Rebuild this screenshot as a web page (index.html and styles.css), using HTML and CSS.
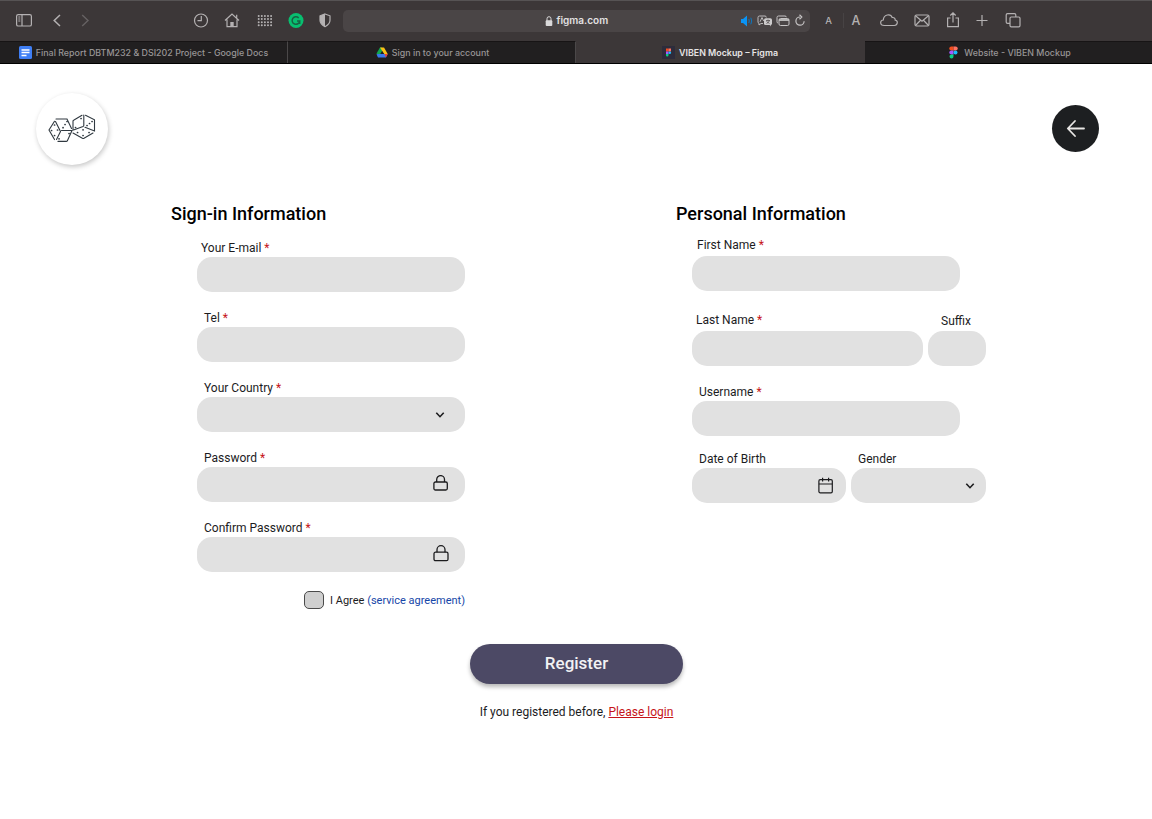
FILE: index.html
```html
<!DOCTYPE html>
<html lang="en">
<head>
<meta charset="utf-8">
<title>VIBEN Mockup – Figma</title>
<link rel="stylesheet" href="styles.css">
</head>
<body>
<header class="browser">
  <div class="toolbar">
    <svg class="ico sidebar" viewBox="0 0 20 20"><rect x="2.6" y="4.6" width="14.800" height="11.400" rx="1.600"/><path d="M8 4.500V16M4.300 7h2M4.300 9h2M4.300 11h2"/></svg>
    <svg class="ico back" viewBox="0 0 20 20"><path d="M13 5 7.2 10.5 13 16"/></svg>
    <svg class="ico forward" viewBox="0 0 20 20"><path d="M7.2 5 13 10.5 7.2 16"/></svg>
    <svg class="ico clock" viewBox="0 0 20 20"><circle cx="10" cy="10.5" r="6.5"/><path d="M10.3 6v4.7H6.5"/></svg>
    <svg class="ico home" viewBox="0 0 20 20"><path d="M3 10.5 10 4l7 6.500M14.700 4.800v3M5 9.500v7.200h10V9.500"/><path class="solid" d="M8.300 16.500v-4.500h3.400v4.500z"/></svg>
    <svg class="ico apps" viewBox="0 0 20 20"><path d="M3.700 6h13M3.700 9.100h13M3.700 12.200h13M3.700 15.300h13"/></svg>
    <svg class="ico grammar" viewBox="0 0 20 20"><circle cx="10" cy="10.500" r="7.500" fill="#08bf70"/><path d="M12.700 7.900A3.800 3.800 0 1 0 13.700 11H11M13.700 11v3" fill="none" stroke="#176344" stroke-width="1.500"/></svg>
    <svg class="ico shield" viewBox="0 0 20 20"><path d="M10 4 15 5.800v4.500c0 3-2.200 5-5 6.400-2.800-1.400-5-3.400-5-6.400V5.800z"/><path class="solid" d="M10 4v12.700c-2.800-1.400-5-3.400-5-6.400V5.800z"/></svg>
    <div class="address">
      <svg class="lock" viewBox="0 0 8 12"><path d="M2 6V3.700a2 2 0 0 1 4 0V6" fill="none" stroke="#dad9da"/><rect x=".7" y="5.300" width="6.600" height="5.700" rx="1" fill="#dad9da"/></svg>
      <span class="domain">figma.com</span>
      <svg class="sound" viewBox="0 0 14 14"><path d="M1 5h2l4-3.400v10.800L3 9H1z" fill="#0a94f5"/><path d="M8.800 5q1 2 0 4M10.800 3.700q1.800 3.300 0 6.600" fill="none" stroke="#0a78c4"/></svg>
      <svg class="translate" viewBox="0 0 16 14"><path d="M6 9.500H4L2 11V9.300Q1 9 1 8V3.500Q1 2 2.500 2H8q1.300 0 1.300 1.500M3 7.800 5 3.500 6.700 7" fill="none" stroke="#bdbbbc"/><rect x="7" y="4.300" width="8" height="6.700" rx="1.600" fill="#cdcbcc"/><path d="m12 10 1.800 2.400V10z" fill="#cdcbcc"/><path d="M9 6.500h4M11 5.500v1M12.500 6.500Q12 8.500 9.500 9.500M9.500 7.500l3 2" fill="none" stroke="#555152" stroke-width=".8"/></svg>
      <svg class="windows" viewBox="0 0 14 14"><path d="M2 9Q1 9 1 7.700V3.500Q1 2 2.500 2H9q1.300 0 1.300 1.200" fill="none" stroke="#c6c4c5"/><rect x="3" y="4.500" width="10" height="7" rx="1.500" fill="none" stroke="#c6c4c5"/><path d="M3 6h10" stroke="#c6c4c5" stroke-width="1.800"/></svg>
      <svg class="reload" viewBox="0 0 12 14"><path d="M6 3A4.100 4.100 0 1 0 10.100 7.200M5.500.8 7.800 3 5.500 5.200" fill="none" stroke="#c6c4c5" stroke-width="1.200"/></svg>
    </div>
    <span class="font-size small">A</span>
    <span class="font-size large">A</span>
    <svg class="ico cloud" viewBox="0 0 20 20"><path d="M5.200 15.500C.5 15.500.8 10 4.300 10 4.600 4.500 11.500 3 13.200 7.500c2.700-.2 3 1.500 3 2.600 3.300.4 2.500 5.400-.8 5.400z"/></svg>
    <svg class="ico mail" viewBox="0 0 20 20"><rect x="3" y="5" width="14" height="11" rx="1.500"/><path d="m3.500 5.700 6.500 5.600 6.500-5.600M3.500 15.500l4.800-5M16.500 15.500l-4.800-5"/></svg>
    <svg class="ico share" viewBox="0 0 20 20"><path d="M7.500 8H4.600v8.700h10.800V8h-2.900M10 12.500V3M7.300 5.500 10 2.900l2.700 2.600"/></svg>
    <svg class="ico plus" viewBox="0 0 20 20"><path d="M4.500 10.500h11M10 5v11"/></svg>
    <svg class="ico tabs-icon" viewBox="0 0 20 20"><path d="M7 13.300H4.500q-1.300 0-1.300-1.300V5q0-1.300 1.300-1.300h7q1.300 0 1.300 1.300v2"/><rect x="7" y="7" width="10" height="9.800" rx="1.300"/></svg>
  </div>
  <nav class="tabs">
    <div class="tab docs"><svg viewBox="0 0 13 13"><rect width="13" height="13" rx="1.500" fill="#3f7ef4"/><path d="M2.500 4h8M2.500 6.500h8M2.500 9.500h5" stroke="#fff" stroke-width="1.400"/></svg><span>Final Report DBTM232 &amp; DSI202 Project - Google Docs</span></div>
    <div class="tab drive"><svg viewBox="0 0 12 12"><path d="M4 1h2.200v4L3 11 .5 7z" fill="#12a650"/><path d="M4 1h4l3.700 6.500H8.200z" fill="#fbc015"/><path d="M3.200 7.500h8.500L10 11H2L.5 7.800z" fill="#3978ee"/><path d="M8.500 7.500h3.300L9.800 11z" fill="#e84234"/><path d="m6 4.500 1.700 3H4.300z" fill="#211f20"/></svg><span>Sign in to your account</span></div>
    <div class="tab active"><svg viewBox="0 0 13 13"><rect width="13" height="13" fill="#2d2c3b"/><path d="M4 2.500h2.500v3H4z" fill="#f24e1e"/><path d="M6.500 2.500H9v3H6.500z" fill="#ff7262"/><path d="M4 5.500h2.500V8H4z" fill="#a259ff"/><circle cx="7.800" cy="6.700" r="1.300" fill="#1abcfe"/><path d="M4 8h2.500v1.300A1.250 1.250 0 1 1 4 9.300z" fill="#0acf83"/></svg><span>VIBEN Mockup – Figma</span></div>
    <div class="tab site"><svg viewBox="0 0 9 13"><path d="M4.500.5H2.300a2 2 0 0 0 0 4h2.200z" fill="#f24e1e"/><path d="M4.500.5h2.200a2 2 0 0 1 0 4H4.500z" fill="#ff7262"/><path d="M4.500 4.500H2.300a2 2 0 0 0 0 4h2.200z" fill="#a259ff"/><circle cx="6.500" cy="6.500" r="2" fill="#1abcfe"/><path d="M4.500 8.500H2.300a2 2 0 1 0 2.200 2z" fill="#0acf83"/></svg><span>Website - VIBEN Mockup</span></div>
  </nav>
</header>

<main class="page">
  <div class="page-head">
    <div class="logo"><svg viewBox="0 0 50 32"><g fill="none" stroke="#303940" stroke-width="1.100" stroke-linecap="round"><path d="M7.500 8.300 2 17l5.500 9.600M9.500 26.500l4-8-5-10M9 6h11l4.500 9.500M14.500 17.500H25L20.500 27.500q-.4.900-1.300.9H11M26 17V8.300q0-.7.600-1L35 2.300M26.500 17l9.500-3.500q.8-.4.800-1.200V2M38.500 2.300 47.500 6.800V18L38 14.300M46 20l-9 5.300q-.8.400-1.600 0L26 20"/></g><path d="M16 14.700h.1M18 11.500h.1M20 8.500h.1M7.500 12h.1M4.500 17.500h.1M10.500 17h.1M7.500 22.500h.1M12 25.800h.1M22 20.500h.1M28.500 14.500h.1M34 5.500h.1M40 12.500h.1M42.500 10.500h.1M45 8.500h.1M30.500 19.500h.1M36 16.800h.1M36 22.500h.1M42 19.500h.1" fill="none" stroke="#303940" stroke-width="1.700" stroke-linecap="round"/></svg></div>
    <button class="return" aria-label="Back"><svg viewBox="0 0 20 20"><path d="M18 9.500H2.200M9 2 1.800 9.500 9 17"/></svg></button>
  </div>

  <form class="columns">
    <section class="signin">
      <h2>Sign-in Information</h2>
      <div class="fields">
        <label class="field email"><span>Your E-mail <b>*</b></span><i class="input"></i></label>
        <label class="field"><span>Tel <b>*</b></span><i class="input"></i></label>
        <label class="field"><span>Your Country <b>*</b></span><i class="input"><svg class="chevron" viewBox="0 0 10 8"><path d="M1.300 1.800 5 5.700l3.700-3.900"/></svg></i></label>
        <label class="field"><span>Password <b>*</b></span><i class="input"><svg class="padlock" viewBox="0 0 16 17"><rect x=".9" y="7" width="13.400" height="8" rx="1.500"/><path d="M3.700 7V4.500a3.900 3.900 0 0 1 7.800 0V7"/></svg></i></label>
        <label class="field"><span>Confirm Password <b>*</b></span><i class="input"><svg class="padlock" viewBox="0 0 16 17"><rect x="1" y="7.200" width="14" height="8.500" rx="1.500"/><path d="M4 7.200V4.700a4 4 0 0 1 8 0v2.500"/></svg></i></label>
      </div>
      <div class="agree"><i class="checkbox"></i><span>I Agree <a>(service agreement)</a></span></div>
    </section>
    <section class="personal">
      <h2>Personal Information</h2>
      <div class="row first">
        <label class="field"><span>First Name <b>*</b></span><i class="input"></i></label>
      </div>
      <div class="row last">
        <label class="field surname"><span>Last Name <b>*</b></span><i class="input"></i></label>
        <label class="field suffix"><span>Suffix</span><i class="input"></i></label>
      </div>
      <div class="row user">
        <label class="field"><span>Username <b>*</b></span><i class="input"></i></label>
      </div>
      <div class="row details">
        <label class="field birth"><span>Date of Birth</span><i class="input"><svg class="calendar" viewBox="0 0 16 17"><rect x=".9" y="2.700" width="13.400" height="13.100" rx="1.300"/><path d="M.9 7h13.400M4.600.8V4.500M10.600.8V4.500"/></svg></i></label>
        <label class="field gender"><span>Gender</span><i class="input"><svg class="chevron" viewBox="0 0 10 8"><path d="M1.300 1.800 5 5.700l3.700-3.900"/></svg></i></label>
      </div>
    </section>
  </form>

  <div class="submit">
    <button class="register">Register</button>
    <p>If you registered before, <a>Please login</a></p>
  </div>
</main>
</body>
</html>
```
FILE: styles.css
```css
* { box-sizing: border-box; }
body { margin: 0; background: #fff; font-family: Roboto, sans-serif; color: #1c1c1e; }
svg { display: block; flex: none; }

.browser { height: 64px; background: #3c3738; border-top: 1px solid #565354; border-bottom: 1px solid #000; font-family: Inter, sans-serif; }
.toolbar { display: flex; align-items: center; height: 40px; padding-bottom: 2px; }
.ico { width: 20px; height: 20px; fill: none; stroke: #b4b1b2; stroke-width: 1.2; }
.ico .solid { fill: #b4b1b2; stroke: none; }
.sidebar { margin-left: 14px; }
.back { margin-left: 13px; stroke-width: 1.5; }
.forward { margin-left: 8px; stroke: #666263; stroke-width: 1.4; }
.clock { margin-left: 96px; }
.home { margin-left: 11px; }
.apps { margin-left: 13px; stroke-width: 2; stroke-linecap: round; stroke-dasharray: 0 3.1; }
.grammar { margin-left: 11px; stroke: none; }
.shield { margin-left: 9px; }
.address { display: flex; align-items: center; width: 467px; height: 22px; margin: 2px 0 0 8px; padding-left: 202px; border-radius: 5px; background: #4a4546; }
.lock { width: 8px; height: 12px; }
.domain { width: 183px; padding-left: 3.5px; font-size: 10px; font-weight: 600; line-height: 20px; height: 22px; color: #e3e1e2; }
.address svg { margin-top: -1px; }
.address .sound { width: 14px; height: 14px; margin-left: 4px; }
.address .translate { width: 16px; height: 14px; margin-left: 3px; }
.address .windows { width: 14px; height: 14px; margin-left: 3px; }
.address .reload { width: 12px; height: 14px; margin-left: 4px; }
.font-size { width: 20px; text-align: center; color: #b4b1b2; }
.small { margin-left: 8.5px; font-size: 9.5px; font-weight: 500; }
.large { margin-left: 4px; width: 26px; border-left: 1px solid #474344; font-size: 12.5px; font-weight: 500; }
.cloud { margin-left: 10.5px; }
.mail { margin-left: 12.500px; }
.share { margin-left: 11.500px; }
.plus { margin-left: 9px; }
.tabs-icon { margin-left: 10.500px; }

.tabs { display: grid; grid-template-columns: 288px 288px 289px 1fr; height: 22px; }
.tab { display: flex; align-items: center; justify-content: center; gap: 4px; border-top: 1px solid #171415; border-right: 1px solid #4b4849; background: #211f20; font-size: 8.9px; font-weight: 500; color: #989596; white-space: nowrap; }
.tab.active { border-color: #3c3738; background: #3c3738; color: #e6e4e5; font-weight: 600; }
.tab:last-child { border-right: 0; }
.tab svg { width: 13px; height: 13px; }
.tab.drive svg { width: 12px; }
.tab.site svg { width: 9px; }
.tab.site { gap: 6px; padding-left: 3px; }
.tab.drive { padding-left: 2px; }

.page-head { display: flex; justify-content: space-between; padding: 29px 53px 0 35.5px; }
.logo { display: flex; align-items: center; justify-content: center; width: 72px; height: 72px; border-radius: 50%; background: #fff; box-shadow: 1px 2px 5px rgba(0, 0, 0, .22); }
.logo svg { width: 50px; height: 32px; }
.return { display: flex; align-items: center; justify-content: center; width: 47px; height: 47px; margin-top: 12px; padding: 0; border: 0; border-radius: 50%; background: #1d1f21; }
.return svg { width: 20px; height: 20px; fill: none; stroke: #e8e6e4; stroke-width: 1.8; stroke-linecap: round; stroke-linejoin: round; }

.columns { display: grid; grid-template-columns: 505px 1fr; height: 479px; padding: 38px 0 0 171px; }
h2 { margin: 0; font-size: 18px; font-weight: 500; line-height: 22px; color: #000; }
.fields { display: grid; gap: 18px; width: 268px; margin: 15px 0 0 26px; }
.field { display: block; font-size: 12px; }
.field span { display: block; height: 17px; padding-left: 7px; line-height: 16px; }
.field.email span { padding-left: 4px; }
.field b { font-weight: 400; color: #c61419; }
.input { display: flex; align-items: center; justify-content: flex-end; height: 35px; padding-right: 16px; border-radius: 15px; background: #e1e1e1; }
.input svg { fill: none; stroke: #1c1c1e; }
.chevron { width: 10px; height: 8px; margin-right: 4px; stroke-width: 1.6; }
.padlock { width: 16px; height: 17px; margin-top: -2px; stroke-width: 1.3; }
.calendar { width: 16px; height: 17px; margin-right: -4px; stroke-width: 1.2; }
.agree { display: flex; align-items: center; justify-content: flex-end; gap: 6px; width: 294px; margin-top: 19px; font-size: 11px; }
.checkbox { width: 20px; height: 18px; border: 1px solid #4a4a4a; border-radius: 5px; background: #cfcfcf; }
.agree a { color: #1546a8; }

.row { display: flex; gap: 5px; padding-left: 16px; }
.row .field { width: 268px; }
.first { margin-top: 12px; }
.first .field span { height: 19px; padding-left: 5px; }
.last { margin-top: 21px; }
.row .surname { width: 231px; }
.last .surname span { height: 19px; padding-left: 4px; }
.row .suffix { width: 58px; padding-top: 1px; }
.last .suffix span { height: 18px; padding-left: 13px; }
.user { margin-top: 18px; }
.details { margin-top: 15px; }
.row .birth { width: 154px; }
.row .gender { width: 135px; }
.gender .chevron { margin-right: -5px; }

.submit { display: flex; flex-direction: column; align-items: center; padding-left: 1px; font-size: 12px; }
.register { width: 213px; height: 40px; padding: 0 0 2px; border: 0; border-radius: 20px; background: #4c4965; box-shadow: 0 3px 4px rgba(0, 0, 0, .28); color: #f2f2f4; font: 500 17px/38px Roboto, sans-serif; }
.submit p { margin: 20px 0 0; line-height: 16px; }
.submit a { color: #c61419; text-decoration: underline; }
```
